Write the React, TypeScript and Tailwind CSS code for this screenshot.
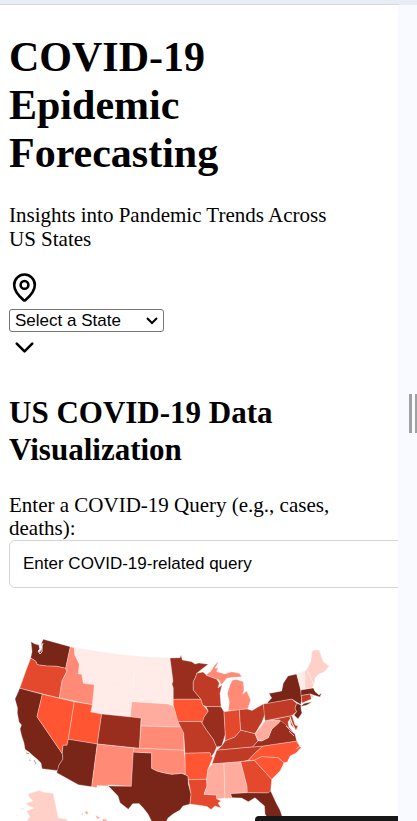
import React from "react";
import { ChevronDown, MapPin } from "lucide-react";

type Region = { id: string; fill: string; d: string };

const C1 = "#ffece8";
const C2 = "#ffd0c7";
const C3 = "#ffab9d";
const C4 = "#ff8b76";
const C5 = "#ff5533";
const C6 = "#e4492d";
const C7 = "#c03b26";
const C8 = "#992e1e";
const C9 = "#792518";

const regions: Region[] = [
  { id: "MT", fill: C1, d: "74,647.7 100,652 118,654.6 135.7,656.3 132.7,686 95,681.7 94.3,684.7 83.3,683.3 81.7,674.3 78.3,674 79.3,664.3 74.7,655" },
  { id: "WY", fill: C1, d: "95,681.7 132.7,686 130.3,717 101.7,714 90.7,712" },
  { id: "ND", fill: C1, d: "135.7,656.3 152,657.6 170,658 171.3,669 173,681 134.3,679.3" },
  { id: "SD", fill: C1, d: "134.3,679.3 173,681 172,684 173.3,688 173.3,705 168,704 163.3,703.7 131.7,701.7" },
  { id: "WA", fill: C9, d: "31,641.7 35,644 39.3,645 40,649 38,651 40,652 42,648 41.5,643 43.3,639.3 70.3,646.7 65.7,668.3 56.7,666.3 46.7,666 37.3,664.7 35.7,661 30.7,658 32,651.7" },
  { id: "OR", fill: C6, d: "30.7,658 35.7,661 37.3,664.7 46.7,666 56.7,666.3 65.7,668.3 67,671 62,681 59.3,698 19.7,688.3 25,673.3" },
  { id: "ID", fill: C4, d: "70.3,646.7 74,647.7 74.7,655 79.3,664.3 78.3,674 81.7,674.3 83.3,683.3 94.3,684.7 92.3,704.7 59.3,698 62,681 67,671 65.7,668.3" },
  { id: "NE", fill: C3, d: "131.7,701.7 163.3,703.7 168,704 173.3,706 177.7,718 180.7,727 141,726 141,718 130.3,717" },
  { id: "KS", fill: C4, d: "141,726 180.7,727 183,729 183.7,733 184,750.3 139.3,748.3" },
  { id: "CA", fill: C9, d: "19.7,688.3 42.3,694.3 37,716.7 62.3,753.7 63,759 59,765 58,770.7 42,768.7 41,763 37,759 33.3,756 29,752 25,749.3 24,743 21.7,736 20,729 21.5,725 19,722 17.3,713 17.5,708 15,699" },
  { id: "NV", fill: C5, d: "42.3,694.3 74.3,701.7 68.3,739.3 67,745.3 63,745.3 62.3,753.7 37,716.7" },
  { id: "UT", fill: C5, d: "74.3,701.7 92.3,704.7 90.7,712 101.7,714 97.3,744 68.3,739.3" },
  { id: "CO", fill: C8, d: "101.7,714 141,718 139.3,748.3 97.3,744" },
  { id: "AZ", fill: C9, d: "68.3,739.3 97.3,744 91.7,786.7 78.3,784.7 56.7,772.7 59,765 63,759 62.3,753.7 63,745.3 67,745.3" },
  { id: "NM", fill: C4, d: "97.3,744 134,748 131.3,786.3 108,785 108,786 97,785.6 96.7,787.7 91.7,786.7" },
  { id: "TX", fill: C9, d: "133.3,752 151.7,753 151.7,768.3 157,771 163.3,772.7 171.7,774.3 181.7,773.3 188,776 188.3,784 191,794 190,804 183,806 180,810 173,814 168,818 166,822 152,822 148,814 143.3,808 139,803.5 132.7,803.7 128.3,809.3 120,802.7 118,796 108.3,786 131.3,786.3" },
  { id: "OK", fill: C4, d: "134,748 184,750.3 185.3,761 185.3,774.5 181.7,773.3 171.7,774.3 163.3,772.7 157,771 151.7,768.3 151.7,753 133.3,752" },
  { id: "MN", fill: C8, d: "170,658 180,657.7 181,655 182.3,660 191.7,661.7 195,664 199,663 208.3,664.3 202,669 196.7,673.3 195.7,677 193.3,681.7 193.3,690 201,699.3 173.3,699.3 173.3,688 172,684 173,681" },
  { id: "IA", fill: C5, d: "173.3,699.3 201,699.3 202.7,705 208.3,711 204,717.3 202.7,722.7 201,721.6 178,721.6 173.3,705" },
  { id: "MO", fill: C7, d: "178,721.6 201,721.6 202,723 206.7,730.3 213.3,739.3 216.7,747 214,753 211,757 210,752.7 185,753.3 183.7,733" },
  { id: "AR", fill: C5, d: "185,753.3 210,752.7 211,756 213,757 208,769 206.7,779.3 188.3,779.7 188,776 185.3,774.5" },
  { id: "LA", fill: C6, d: "188.3,779.7 206.7,779.3 207,786 204,794.3 216.7,795 217,799 221,801 218,803 221,808 215,806 211,809.5 207,806.5 201,805.5 190,804 191,794" },
  { id: "WI", fill: C7, d: "196.7,673.3 203,672 206.7,675.3 216.7,679 219.3,683.3 218,688 222,685 220,693.3 221,706.7 206,706.5 202.7,705 201,699.3 193.3,690 193.3,681.7 195.7,677" },
  { id: "MI-U", fill: C4, d: "206,675 211,671 214,666 217.5,662 218,663 215,668.3 218,667.7 216.7,671.7 225,674 231.7,671.7 239.3,673.3 242,676.7 233.3,677.3 226.7,678.3 221.5,685 219,680" },
  { id: "MI-L", fill: C4, d: "232.5,680 236.7,679.5 243.3,681.7 244,690 242.7,694 246.7,691 250.7,700 249,705 247.7,709 240,710 228.3,710.7 229.3,701.7 227.3,693.3 230,685" },
  { id: "IL", fill: C8, d: "206,706.5 221,706.7 224,711.7 225.3,734.3 221.7,746 216.7,747 213.3,739.3 206.7,730.3 202,723 204,717.3 208.3,711" },
  { id: "IN", fill: C6, d: "224,711.7 239.3,709.7 240.7,730.3 235,737 225,741 225.3,734.3" },
  { id: "OH", fill: C7, d: "239.3,709.7 247,709 252,710.5 263.3,704 265,714 262,722 255,733.7 246.7,731.7 240.7,730.3" },
  { id: "KY", fill: C7, d: "216.7,750.3 221.7,746 225,741 235,737 240.7,730.3 246.7,731.7 255,733.7 258,741 252.7,747" },
  { id: "TN", fill: C7, d: "216.7,750.3 263,746 254,754 248.3,760.3 240.7,761.7 212,764" },
  { id: "MS", fill: C3, d: "212,764 224,763 225,798 216.7,799 216.7,795 204,794.3 207,786 206.7,779.3 208,769" },
  { id: "AL", fill: C3, d: "224,763 240.7,761.7 247,786 247.3,792.7 230.7,793.7 232,798 225,798.5" },
  { id: "GA", fill: C6, d: "240.7,761.7 254.3,760.3 271.7,779.3 270.7,791 269,793 247.3,792.7 247,786" },
  { id: "FL", fill: C9, d: "230.7,793.7 247.3,792.7 268,793 270.7,791 276.7,804 280,810 284,822 270,822 265,814 264.5,806 255,797.7 248.3,801.7 241.7,798 232,797.7" },
  { id: "NC", fill: C5, d: "263,746 297,741 301,747.7 296,753 290,756 287.3,762 284,762.7 278,757.7 261.7,756.7 254.3,760.3 248.3,760.3 254,754" },
  { id: "SC", fill: C5, d: "254.3,760.3 261.7,756.7 278,757.7 284,762.7 280,771 271.7,779.3" },
  { id: "VA", fill: C8, d: "252.7,747 258,741 261.7,741 268.3,737.7 271.7,729.3 278,722.7 282,720 288,726 295,734.3 296.7,741 263,746" },
  { id: "WV", fill: C3, d: "265,720.7 272,720 280,719 279,723 271.7,729.3 268.3,737.7 261.7,741 258,740 255,733.7 262,725" },
  { id: "MD", fill: C7, d: "271,720 292,715.5 295,725 298,726 296,730 291,725 290,719 288,722 289,728 284,723 279,720" },
  { id: "PA", fill: C7, d: "263.3,704 291.7,699 296.7,703.3 295,708.3 296.7,711.7 292,715.5 265,720.7" },
  { id: "NJ", fill: C9, d: "296.7,703.3 301,705 301,709 302,713 298,719 294,715 296.7,711.7 295,708.3" },
  { id: "NY", fill: C9, d: "266.7,703.4 271.7,698 269,693.5 281.7,691 283.3,683.3 288,676 296.7,674 300.7,690 301.7,700 300.7,704.5 291.7,699" },
  { id: "LI", fill: C9, d: "300.7,706.5 304,703.5 312,701.7 307,705" },
  { id: "VT", fill: C1, d: "296.7,674 305,671 305,689 301,690" },
  { id: "NH", fill: C2, d: "305,671 306.7,669.3 314,685 312,688 305,689" },
  { id: "ME", fill: C2, d: "306.7,669.3 311,661 311.7,651.7 314,650 319.3,650 323.3,661.7 329.3,666 324,672 319,674 315,678 314,685" },
  { id: "MA", fill: C9, d: "301,690 313.3,688 315,691.5 319,695 321.5,693 320,697 315,695.5 310.5,694 301,695.5" },
  { id: "CT", fill: C7, d: "301.3,695.5 310.5,694 311.5,699 302,703" },
  { id: "RI", fill: C2, d: "310.5,694 314,696.5 311.5,699" },
  { id: "AK", fill: C2, d: "28.3,793.7 34,792 39.3,790.3 43,792 53.3,793.3 58.3,817.7 66,819 69,822 26,822 30,817 26.7,811 34,808 28.3,806 26,803 33,801 29,797" },
  { id: "AK-1", fill: C2, d: "20,808 24,808.5 23,810" },
  { id: "AK-2", fill: C2, d: "16,815 18,814.5 18,816" },
  { id: "HI-1", fill: C3, d: "81,814 83,813 83,815" },
  { id: "HI-2", fill: C3, d: "84.5,812 87,811 88.5,813 86.5,814.5" },
  { id: "HI-3", fill: C3, d: "95.500,815 98,816.500 100.500,818 97,819" },
  { id: "HI-4", fill: C3, d: "102.500,818.5 107.500,820 106,822 102.500,822" },
];

function StatesMap() {
  return (
    <svg
      viewBox="9 630 389 191"
      className="mt-[42px] block w-full"
      role="img"
      aria-label="US states by COVID-19 cases"
    >
      {regions.map((r) => (
        <polygon
          key={r.id}
          points={r.d}
          fill={r.fill}
          stroke={r.fill === C1 ? "#f8e5e1" : "#ffffff"}
          strokeOpacity={0.45}
          strokeWidth={0.7}
          strokeLinejoin="round"
        />
      ))}
      <path d="M39 645l1 4-2 2 2 3 2-2 0-6 1-3" fill="none" stroke="#fff" strokeWidth="0.8" />
      <path d="M290 717l2 6 3 6" fill="none" stroke="#fff" strokeWidth="1" />
      <path d="M286 726l4 4 4 3M289 731l5 5M297 742l3 4-4 3" fill="none" stroke="#fff" strokeWidth="0.7" />
      <path d="M26 753l3 .6M29 760l1.500 .3M34 760l2 4" fill="none" stroke={C9} strokeWidth="0.8" opacity="0.6" />
      <path d="M200 664.500h5l-4 2.500z" fill={C8} />
    </svg>
  );
}

export default function App() {
  return (
    <div className="relative flex h-screen flex-col overflow-hidden bg-white font-['Liberation_Serif','Times_New_Roman',serif] text-[21px] leading-6 text-black">
      <div className="h-[5px] shrink-0 bg-[#e8edf5]">
        <div className="mr-[18px] h-full border-b border-[#d5d7dc]" />
      </div>
      <div className="flex min-h-0 flex-1">
        <main className="min-w-0 flex-1 overflow-hidden pt-7 pl-[9px]">
          <header className="max-w-[340px]">
            <h1 className="text-[42px] leading-[48px] font-bold">COVID-19 Epidemic Forecasting</h1>
            <p className="mt-[26px]">Insights into Pandemic Trends Across US States</p>
          </header>

          <div className="mt-[21px] flex flex-col items-start">
            <MapPin size={31} strokeWidth={2} aria-hidden="true" />
            <div className="relative mt-[6px] w-[155px]">
              <select
                aria-label="Select a State"
                className="block h-[23px] w-full appearance-none rounded-[3px] border border-[#767676] bg-white pl-[5px] font-['Liberation_Sans',Arial,sans-serif] text-[17px] leading-[21px]"
              >
                <option>Select a State</option>
                <option>California</option>
                <option>New York</option>
                <option>Texas</option>
              </select>
              <svg
                viewBox="0 0 12 8"
                className="pointer-events-none absolute top-2 right-[6px] h-2 w-3"
                fill="none"
                stroke="currentColor"
                strokeWidth="2"
                aria-hidden="true"
              >
                <path d="M1 1l5 5 5-5" />
              </svg>
            </div>
            <ChevronDown size={31} strokeWidth={2} aria-hidden="true" />
          </div>

          <section className="mt-[31px]">
            <h2 className="max-w-[340px] text-[31px] leading-[37px] font-bold">
              US COVID-19 Data Visualization
            </h2>
            <label htmlFor="query" className="mt-[26px] block max-w-[340px] leading-[23px]">
              Enter a COVID-19 Query (e.g., cases, deaths):
            </label>
            <input
              id="query"
              type="text"
              placeholder="Enter COVID-19-related query"
              className="block h-12 w-[110%] rounded-[6px] border border-[#d5d5d5] px-[13px] font-['Liberation_Sans',Arial,sans-serif] text-[17px] leading-5 placeholder:text-black"
            />
            <StatesMap />
          </section>
        </main>
        <aside className="flex w-[19px] shrink-0 items-center gap-[3px] overflow-hidden bg-[#f8faff] pl-[11px]">
          <span className="h-[39px] w-[3px] shrink-0 bg-[#a0a0a0]" />
          <span className="h-[39px] w-[3px] shrink-0 bg-[#a0a0a0]" />
        </aside>
      </div>
      <div className="absolute right-[19px] bottom-0 h-[5px] w-[143px] rounded-tl-[4px] bg-[#171717]" />
    </div>
  );
}
